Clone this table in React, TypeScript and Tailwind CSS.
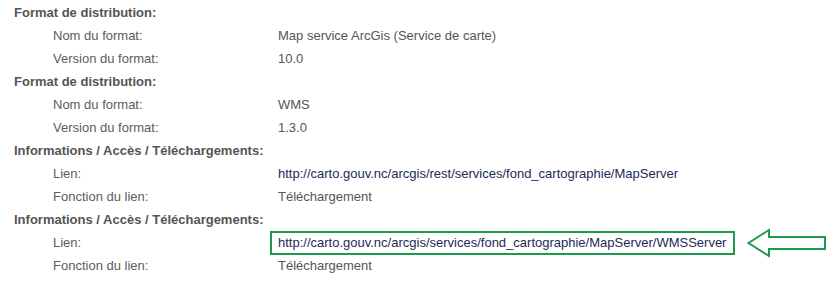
import React from "react";

type Row = { label: string; value: string; link?: boolean; boxed?: boolean };
type Section = { title: string; rows: Row[] };

const sections: Section[] = [
  {
    title: "Format de distribution:",
    rows: [
      { label: "Nom du format:", value: "Map service ArcGis (Service de carte)" },
      { label: "Version du format:", value: "10.0" },
    ],
  },
  {
    title: "Format de distribution:",
    rows: [
      { label: "Nom du format:", value: "WMS" },
      { label: "Version du format:", value: "1.3.0" },
    ],
  },
  {
    title: "Informations / Accès / Téléchargements:",
    rows: [
      { label: "Lien:", value: "http://carto.gouv.nc/arcgis/rest/services/fond_cartographie/MapServer", link: true },
      { label: "Fonction du lien:", value: "Téléchargement" },
    ],
  },
  {
    title: "Informations / Accès / Téléchargements:",
    rows: [
      { label: "Lien:", value: "http://carto.gouv.nc/arcgis/services/fond_cartographie/MapServer/WMSServer", link: true, boxed: true },
      { label: "Fonction du lien:", value: "Téléchargement" },
    ],
  },
];

export default function App() {
  return (
    <div
      className="w-[837px] h-[282px] bg-white pt-[1px] text-[13px] text-[#555555] overflow-hidden"
      style={{ fontFamily: '"Liberation Sans", Arial, sans-serif' }}
    >
      {sections.map((s, i) => (
        <div key={i}>
          <div className="h-[23px] leading-[23px] pl-[14px] font-bold text-[#555555]">{s.title}</div>
          {s.rows.map((r, j) => (
            <div key={j} className="h-[23px] flex items-center">
              <div className="w-[278px] pl-[53px] shrink-0 text-[#5c5c5c]">{r.label}</div>
              {r.boxed ? (
                <div className="flex items-center">
                  <div className="-ml-[8px] h-[24px] border-2 border-[#1e9a4e] pl-[6px] pr-[7px] flex items-center text-[#1c2a58]">
                    {r.value}
                  </div>
                  <svg width="80" height="30" viewBox="0 0 80 30" className="ml-[12px]">
                    <polygon
                      points="1.5,15 22,2 22,9 78,9 78,21 22,21 22,28"
                      fill="none"
                      stroke="#1e9a4e"
                      strokeWidth="2"
                      strokeLinejoin="miter"
                    />
                  </svg>
                </div>
              ) : (
                <div className={r.link ? "text-[#1c2a58]" : ""}>{r.value}</div>
              )}
            </div>
          ))}
        </div>
      ))}
    </div>
  );
}
